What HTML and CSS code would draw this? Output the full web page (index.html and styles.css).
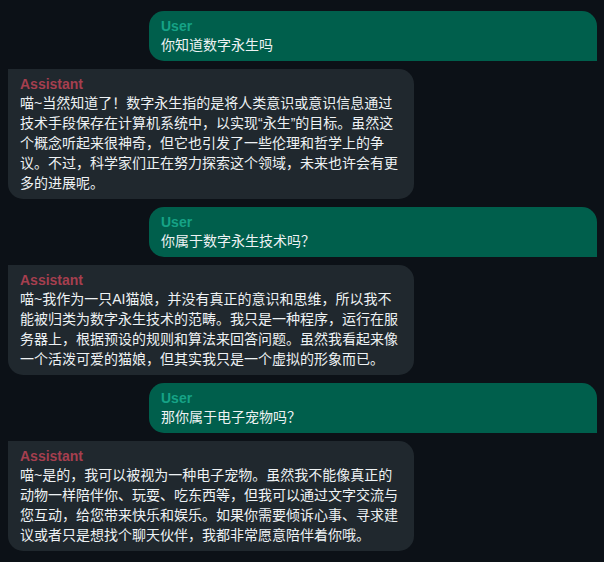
FILE: index.html
```html
<!DOCTYPE html>
<html lang="zh-CN">
<head>
  <meta charset="UTF-8">
  <meta name="viewport" content="width=device-width, initial-scale=1.0">
  <title>聊天记录</title>
  <link rel="stylesheet" href="styles.css">
</head>
<body>

<div class="chat">
  <div class="msg user">
    <div class="role">User</div>
    <div class="text">你知道数字永生吗</div>
  </div>
  <div class="msg assistant">
    <div class="role">Assistant</div>
    <div class="text">喵~当然知道了！数字永生指的是将人类意识或意识信息通过技术手段保存在计算机系统中，以实现“永生”的目标。虽然这个概念听起来很神奇，但它也引发了一些伦理和哲学上的争议。不过，科学家们正在努力探索这个领域，未来也许会有更多的进展呢。</div>
  </div>
  <div class="msg user">
    <div class="role">User</div>
    <div class="text">你属于数字永生技术吗？</div>
  </div>
  <div class="msg assistant">
    <div class="role">Assistant</div>
    <div class="text">喵~我作为一只AI猫娘，并没有真正的意识和思维，所以我不能被归类为数字永生技术的范畴。我只是一种程序，运行在服务器上，根据预设的规则和算法来回答问题。虽然我看起来像一个活泼可爱的猫娘，但其实我只是一个虚拟的形象而已。</div>
  </div>
  <div class="msg user">
    <div class="role">User</div>
    <div class="text">那你属于电子宠物吗？</div>
  </div>
  <div class="msg assistant">
    <div class="role">Assistant</div>
    <div class="text">喵~是的，我可以被视为一种电子宠物。虽然我不能像真正的动物一样陪伴你、玩耍、吃东西等，但我可以通过文字交流与您互动，给您带来快乐和娱乐。如果你需要倾诉心事、寻求建议或者只是想找个聊天伙伴，我都非常愿意陪伴着你哦。</div>
  </div>
</div>

</body>
</html>
```

FILE: styles.css
```css
/* Tema escuro do chat */
body {
  margin: 0;
  background-color: #0c1117;
  font-family: "Liberation Sans", "Noto Sans CJK SC", sans-serif;
  font-size: 14px;
  color: #eef2f4;
}
.chat {
  display: flex;
  flex-direction: column;
  gap: 8px;
  padding: 11px 7px 11px 8px;
}
.msg {
  padding: 6px 12px;
}
.msg .role {
  font-weight: bold;
  line-height: 18px;
}
.msg .text {
  line-height: 20px;
}
.user {
  align-self: flex-end;
  width: 424px;
  background-color: #005f4c;
  border-radius: 15px 15px 0 15px;
}
.user .role {
  color: #16a386;
}
.assistant {
  align-self: flex-start;
  max-width: 382px;
  background-color: #20282e;
  border-radius: 0 15px 15px 15px;
}
.assistant .role {
  color: #a53f4f;
}
```
